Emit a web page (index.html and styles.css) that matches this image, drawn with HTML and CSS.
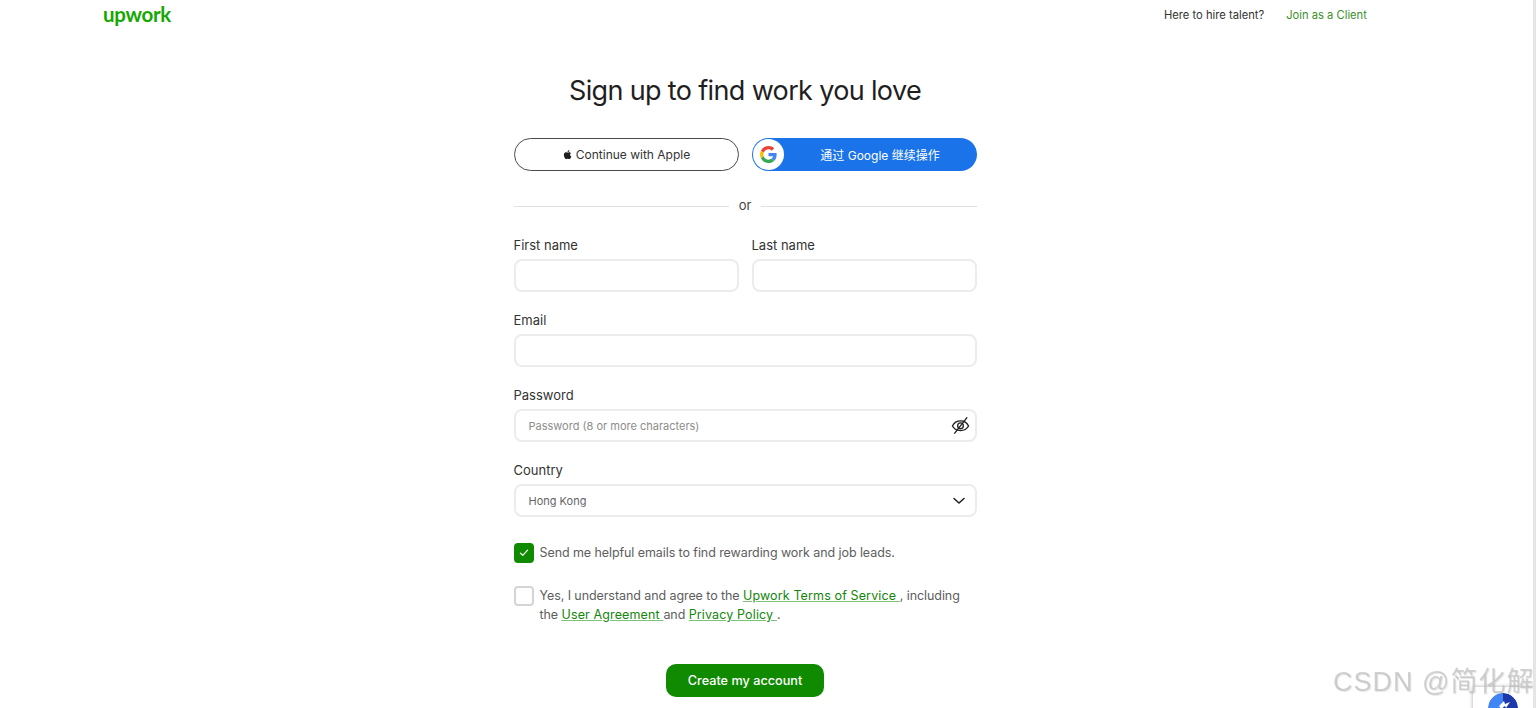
FILE: index.html
```html
<!DOCTYPE html>
<html lang="en">
<head>
  <meta charset="UTF-8">
  <meta name="viewport" content="width=device-width, initial-scale=1.0">
  <title>Sign up - Upwork</title>
  <link rel="stylesheet" href="styles.css">
</head>
<body>
  <div class="page">
    <header class="topbar">
      <a class="logo" href="#">upwork</a>
      <nav class="topbar-links">
        <span class="hire">Here to hire talent?</span>
        <a class="join" href="#">Join as a Client</a>
      </nav>
    </header>

    <main class="signup">
      <h1>Sign up to find work you love</h1>

      <div class="social">
        <button class="btn-apple" type="button">
          <svg class="apple-icon" viewBox="0 0 24 24" width="11" height="11"><path fill="#1f1f1f" d="M17.6 12.7c0-2.5 2-3.7 2.1-3.8-1.2-1.700-3-1.900-3.600-2-1.500-.2-3 .9-3.800.9s-2-.9-3.300-.9c-1.700 0-3.300 1-4.100 2.500-1.800 3.100-.5 7.600 1.200 10.100.9 1.200 1.900 2.600 3.200 2.500 1.300-.1 1.800-.8 3.300-.8s2 .8 3.300.8c1.400 0 2.300-1.200 3.100-2.500 1-1.400 1.400-2.800 1.400-2.900-.1 0-2.800-1.100-2.800-4.400zM15.100 5.300c.7-.9 1.200-2 1-3.200-1 0-2.200.7-2.900 1.500-.6.700-1.200 1.900-1 3 1.100.1 2.200-.5 2.900-1.300z"/></svg>
          Continue with Apple
        </button>
        <button class="btn-google" type="button">
          <span class="google-badge">
            <svg viewBox="0 0 48 48" width="17" height="17">
              <path fill="#EA4335" d="M24 9.500c3.500 0 6.700 1.200 9.200 3.600l6.900-6.900C35.900 2.400 30.500 0 24 0 14.600 0 6.500 5.400 2.600 13.200l8 6.200C12.500 13.700 17.800 9.500 24 9.500z"/>
              <path fill="#4285F4" d="M46.900 24.500c0-1.600-.1-3.100-.4-4.500H24v9h12.900c-.6 3-2.200 5.500-4.700 7.200l7.700 6c4.500-4.200 7-10.300 7-17.700z"/>
              <path fill="#FBBC05" d="M10.500 28.600c-.5-1.400-.8-3-.8-4.600s.3-3.200.8-4.600l-8-6.200C.9 16.500 0 20.100 0 24s.9 7.500 2.600 10.800l7.900-6.200z"/>
              <path fill="#34A853" d="M24 48c6.500 0 11.900-2.100 15.900-5.800l-7.700-6c-2.100 1.400-4.900 2.300-8.200 2.300-6.200 0-11.500-4.200-13.400-9.900l-8 6.200C6.500 42.600 14.600 48 24 48z"/>
            </svg>
          </span>
          <span class="google-text">通过 Google 继续操作</span>
        </button>
      </div>

      <div class="divider"><span>or</span></div>

      <form class="fields">
        <div class="name-row">
          <div class="field">
            <label for="firstName">First name</label>
            <input id="firstName" type="text">
          </div>
          <div class="field">
            <label for="lastName">Last name</label>
            <input id="lastName" type="text">
          </div>
        </div>

        <div class="field">
          <label for="email">Email</label>
          <input id="email" type="text">
        </div>

        <div class="field">
          <label for="password">Password</label>
          <div class="input-wrap">
            <input id="password" type="text" placeholder="Password (8 or more characters)">
            <svg class="eye" viewBox="0 0 20 20" width="19" height="19" fill="none" stroke="#1f1f1f" stroke-width="1.400">
              <path d="M1.500 10.500c1.800-3.600 4.700-5.400 8.500-5.400s6.700 1.800 8.500 5.400c-1.800 3.200-4.700 4.800-8.500 4.800s-6.700-1.600-8.500-4.800z"/>
              <circle cx="10" cy="10.200" r="3"/>
              <path d="M17 1.500L3.500 18.500"/>
            </svg>
          </div>
        </div>

        <div class="field">
          <label for="country">Country</label>
          <div class="input-wrap">
            <input id="country" class="country" type="text" value="Hong Kong">
            <svg class="chevron" viewBox="0 0 12 8" width="12" height="8" fill="none" stroke="#1f1f1f" stroke-width="1.500" stroke-linecap="round" stroke-linejoin="round"><path d="M1 1.500l5 4.500 5-4.500"/></svg>
          </div>
        </div>
      </form>

      <div class="check-row emails">
        <span class="box checked">
          <svg viewBox="0 0 12 10" width="10" height="8" fill="none" stroke="#fff" stroke-width="1.500" stroke-linecap="round" stroke-linejoin="round"><path d="M1.500 5.200l3 2.800 6-6.500"/></svg>
        </span>
        <p>Send me helpful emails to find rewarding work and job leads.</p>
      </div>

      <div class="check-row terms">
        <span class="box"></span>
        <p>Yes, I understand and agree to the <a href="#">Upwork Terms of Service </a>, including the <a href="#">User Agreement </a>and <a href="#">Privacy Policy </a>.</p>
      </div>

      <div class="submit-row">
        <button class="btn-create" type="button">Create my account</button>
      </div>
    </main>
  </div>

  <!-- recaptcha badge + watermark -->
  <div class="captcha">
    <svg viewBox="0 0 30 30" width="30" height="30">
      <path fill="#4285f4" d="M15 0A15 15 0 0 0 0 15v15h15z"/>
      <path fill="#1c3aa9" d="M15 0a15 15 0 0 1 15 15v15H15z"/>
      <path fill="#fff" d="M11 13l5-5 1 3 5-2-4 6-1-2-4 3z"/>
    </svg>
  </div>
  <div class="watermark">CSDN @简化解</div>
  <div class="scroll-edge"></div>
</body>
</html>
```

FILE: styles.css
```css
* {
  box-sizing: border-box;
}
html, body {
  height: 100%;
}
body {
  margin: 0;
  background: #fff;
  color: #1f1f1f;
  font-family: Inter, "Noto Sans CJK SC", sans-serif;
  overflow: hidden;
}
a {
  color: #14860a;
}
.page {
  width: 1490px;
}
.topbar {
  display: flex;
  justify-content: space-between;
  align-items: center;
  height: 30px;
  padding: 0 14px 0 103px;
}
.logo {
  color: #14a800;
  font-family: Lato, sans-serif;
  font-size: 20.500px;
  font-weight: 700;
  letter-spacing: -0.3px;
  text-decoration: none;
  line-height: 28px;
  margin-top: -3px;
}
.topbar-links {
  display: flex;
  gap: 22px;
  width: 204px;
  margin-right: 108px;
  font-size: 11.200px;
  white-space: nowrap;
  color: #333;
}
.join {
  color: #3c8f2c;
  text-decoration: none;
}
.signup {
  width: 463px;
  margin: 0 auto;
}
h1 {
  margin: 43px 0 29px;
  font-size: 27px;
  font-weight: 400;
  line-height: 36px;
  letter-spacing: -0.65px;
  text-align: center;
  white-space: nowrap;
}
.social {
  display: grid;
  grid-template-columns: 1fr 1fr;
  gap: 13px;
}
.btn-apple,
.btn-google {
  height: 33px;
  border-radius: 17px;
  font-family: inherit;
  font-size: 12px;
  cursor: pointer;
}
.btn-apple {
  display: flex;
  align-items: center;
  justify-content: center;
  gap: 3px;
  background: #fff;
  border: 1px solid #4a4a4a;
  color: #333;
}
.btn-google {
  display: flex;
  align-items: center;
  padding: 0 0 0 1px;
  background: #1a73e8;
  border: 0;
  color: #fff;
}
.google-badge {
  display: flex;
  align-items: center;
  justify-content: center;
  width: 31px;
  height: 31px;
  border-radius: 50%;
  background: #fff;
}
.google-text {
  flex: 1;
  font-size: 12px;
  text-align: center;
}
.divider {
  display: flex;
  align-items: center;
  gap: 10px;
  margin: 27px 0 22px;
  height: 17px;
  font-size: 13px;
  color: #444;
}
.divider span {
  line-height: 17px;
  margin-top: -2px;
}
.divider::before,
.divider::after {
  content: "";
  flex: 1;
  height: 1px;
  background: #e0e0e0;
}
.fields {
  display: flex;
  flex-direction: column;
  gap: 20px;
}
.name-row {
  display: grid;
  grid-template-columns: 1fr 1fr;
  gap: 13px;
}
.field label {
  display: block;
  height: 22px;
  font-size: 13px;
  line-height: 17px;
  color: #333;
}
.field input {
  display: block;
  width: 100%;
  height: 33px;
  padding: 0 40px 0 13px;
  background: #fff;
  border: 2px solid #ececec;
  border-radius: 8px;
  font-family: inherit;
  font-size: 11px;
  color: #666;
  outline: none;
}
.field input::placeholder {
  color: #8d8d8d;
}
.input-wrap {
  position: relative;
}
.eye {
  position: absolute;
  right: 7px;
  top: 7px;
}
.chevron {
  position: absolute;
  right: 12px;
  top: 13px;
}
.check-row {
  display: flex;
  gap: 6px;
  font-size: 12.500px;
  letter-spacing: -0.08px;
  line-height: 19px;
  color: #5e5e5e;
}
.check-row p {
  margin: 0;
}
.check-row a {
  color: #14860a;
  letter-spacing: 0.13px;
  text-decoration-color: #7cc277;
}
.box {
  display: flex;
  align-items: center;
  justify-content: center;
  flex: none;
  width: 20px;
  height: 20px;
  border: 2px solid #d5d5d5;
  border-radius: 4px;
}
.box.checked {
  background: #108a00;
  border-color: #108a00;
}
.emails {
  margin-top: 26px;
}
.terms {
  margin-top: 23px;
}
.submit-row {
  display: flex;
  justify-content: center;
  margin-top: 40px;
}
.btn-create {
  width: 158px;
  height: 33px;
  background: #108a00;
  border: 0;
  border-radius: 10px;
  color: #fff;
  font-family: inherit;
  font-size: 12.700px;
  font-weight: 500;
  cursor: pointer;
}
.captcha {
  position: fixed;
  left: 1473px;
  top: 687px;
  width: 70px;
  height: 40px;
  padding: 6px 0 0 15px;
  background: #fff;
  box-shadow: 0 0 4px rgba(0, 0, 0, 0.35);
}
.captcha svg {
  display: block;
  border-radius: 50%;
}
.watermark {
  position: fixed;
  left: 1333px;
  top: 662px;
  font-family: "Liberation Sans", "Noto Sans CJK SC", sans-serif;
  font-size: 27px;
  line-height: 40px;
  letter-spacing: 1px;
  white-space: nowrap;
  color: rgba(190, 190, 190, 0.7);
  text-shadow: 1px 1px 1px rgba(0, 0, 0, 0.1);
}
.scroll-edge {
  position: fixed;
  right: 0;
  top: 0;
  width: 3px;
  height: 100%;
  background: #e6e6e6;
}
```
